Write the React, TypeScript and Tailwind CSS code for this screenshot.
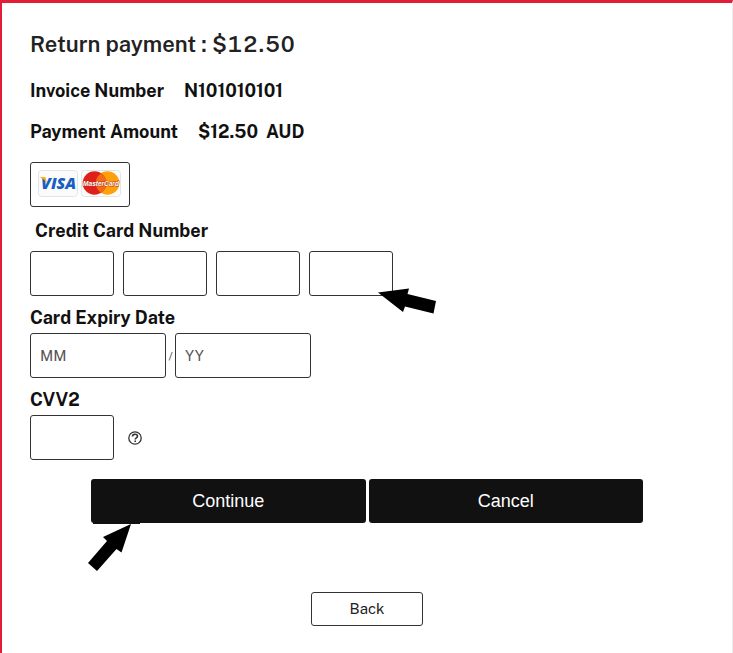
import { useState } from "react"

const inputClass =
  "block h-[45px] rounded-[3px] border border-[#333] bg-white px-[9px] text-[15px] text-[#333] outline-none placeholder:text-[#555]"

const labelClass = "block text-lg leading-6 font-bold text-[#111]"

function VisaLogo() {
  return (
    <svg width="40" height="27" viewBox="0 0 40 27" role="img" aria-label="Visa">
      <rect x="0.5" y="0.5" width="39" height="26" rx="3" fill="#fbfbfb" stroke="#e2e5e6" />
      <text
        x="3"
        y="18.5"
        fontFamily="Open Sans, sans-serif"
        fontSize="16"
        fontWeight="800"
        fontStyle="italic"
        fill="#1a5fc0"
      >
        VISA
      </text>
      <path d="M1.5 7h4.800c.9 0 1.300.4 1.500 1.200l1 4.600C7.200 10.500 5 8.500 1.500 7z" fill="#f5b21b" />
    </svg>
  )
}

function MasterCardLogo() {
  return (
    <svg width="40" height="27" viewBox="0 0 40 27" role="img" aria-label="MasterCard">
      <rect x="0.5" y="0.5" width="39" height="26" rx="3" fill="#fbfbfb" stroke="#e2e5e6" />
      <circle cx="26.500" cy="13" r="11.800" fill="#fda00c" />
      <circle cx="13.500" cy="13" r="11.800" fill="#df1f19" />
      <path d="M20 3.150a11.800 11.800 0 0 1 0 19.700a11.800 11.800 0 0 1 0-19.700z" fill="#f26a16" />
      <text
        x="20"
        y="15.500"
        textAnchor="middle"
        fontFamily="Liberation Sans, sans-serif"
        fontSize="6.500"
        fontWeight="700"
        fontStyle="italic"
        fill="#fff"
        stroke="#b5301a"
        strokeWidth="0.800"
        paintOrder="stroke"
      >
        MasterCard
      </text>
    </svg>
  )
}

function HelpIcon() {
  return (
    <svg width="14" height="14" viewBox="0 0 14 14" fill="none" stroke="#333" aria-hidden="true">
      <circle cx="7" cy="7" r="6.200" strokeWidth="1.300" />
      <path d="M4.500 5.500c0-1.400 1.100-2.300 2.500-2.300s2.500.8 2.500 2.100c0 1.600-2.300 1.600-2.300 3.300" strokeWidth="1.600" />
      <path d="M7.200 9.500v1.600" strokeWidth="1.600" />
    </svg>
  )
}

export default function App() {
  const [digits, setDigits] = useState(["", "", "", ""])

  const updateDigits = (index: number, value: string) => {
    setDigits(digits.map((d, i) => (i === index ? value : d)))
  }

  return (
    <main className="min-h-screen border-t-[3px] border-r border-l-2 border-t-[#e31c37] border-r-[#eee] border-l-[#e31c37] bg-white px-7 pt-[27px] pb-[27px] font-['Public_Sans',Inter,sans-serif]">
      <h1 className="text-[22px] leading-7 font-semibold text-[#222] tabular-nums">Return payment : $12.50</h1>

      <dl className="mt-[21px] text-lg leading-6 font-bold text-[#111]">
        <div className="flex gap-5">
          <dt>Invoice Number</dt>
          <dd>N101010101</dd>
        </div>
        <div className="mt-[17px] flex gap-5">
          <dt>Payment Amount</dt>
          <dd className="flex gap-2">
            <span>$12.50</span>
            <span>AUD</span>
          </dd>
        </div>
      </dl>

      <form onSubmit={e => e.preventDefault()}>
        {/* Accepted cards */}
        <div className="mt-[18px] flex h-[45px] w-[100px] items-start gap-[3px] rounded-[3px] border border-[#333] px-[7px] pt-[7px]">
          <VisaLogo />
          <MasterCardLogo />
        </div>

        <fieldset className="mt-3">
          <legend className={`${labelClass} pl-[5px]`}>Credit Card Number</legend>
          <div className="mt-2 flex gap-[9px]">
            {digits.map((d, i) => (
              <div key={i} className="relative">
                <input
                  className={`${inputClass} w-[84px]`}
                  aria-label={`Card digits, group ${i + 1}`}
                  maxLength={4}
                  value={d}
                  onChange={e => updateDigits(i, e.target.value)}
                />
                {i === 3 && (
                  <svg
                    className="pointer-events-none absolute top-[37px] left-[69px]"
                    width="60"
                    height="26"
                    viewBox="0 0 60 26"
                    aria-hidden="true"
                  >
                    <path d="M0 4.500 31 .5 29.500 6 58 13 55.500 25.500 27 18.500 25 24z" />
                  </svg>
                )}
              </div>
            ))}
          </div>
        </fieldset>

        <fieldset className="mt-2.5">
          <legend className={labelClass}>Card Expiry Date</legend>
          <div className="mt-[3px] flex items-center">
            <input className={`${inputClass} w-[136px]`} placeholder="MM" aria-label="Expiry month" />
            <span className="w-[9px] text-center text-xs text-[#555]">/</span>
            <input className={`${inputClass} w-[136px]`} placeholder="YY" aria-label="Expiry year" />
          </div>
        </fieldset>

        <div className="mt-2.5">
          <label htmlFor="cvv2" className={labelClass}>CVV2</label>
          <div className="mt-[3px] flex items-center gap-3.5">
            <input id="cvv2" className={`${inputClass} w-[84px]`} maxLength={4} />
            <button type="button" aria-label="What is CVV2?">
              <HelpIcon />
            </button>
          </div>
        </div>

        <div className="mx-auto mt-[19px] flex w-5/6 max-w-[552px] gap-[3px] font-['Liberation_Sans',Arial,sans-serif] text-lg text-white">
          <button type="submit" className="relative h-11 flex-1 rounded-[3px] bg-[#111]">
            Continue
            <svg
              className="pointer-events-none absolute top-[44px] -left-[3px]"
              width="54"
              height="50"
              viewBox="0 0 54 50"
              aria-hidden="true"
            >
              <path d="M43 1 33.500 29.500 28.500 26 9 48 0 40 19 18 15 14z" />
              <path d="M5 0h47v1H5z" fill="#111" />
            </svg>
          </button>
          <button type="button" className="h-11 flex-1 rounded-[3px] bg-[#111]">
            Cancel
          </button>
        </div>
      </form>

      <div className="mt-[69px] flex justify-center">
        <button
          type="button"
          className="h-[34px] w-[112px] rounded-[3px] border border-[#333] bg-white text-[15px] text-[#222]"
        >
          Back
        </button>
      </div>
    </main>
  )
}
